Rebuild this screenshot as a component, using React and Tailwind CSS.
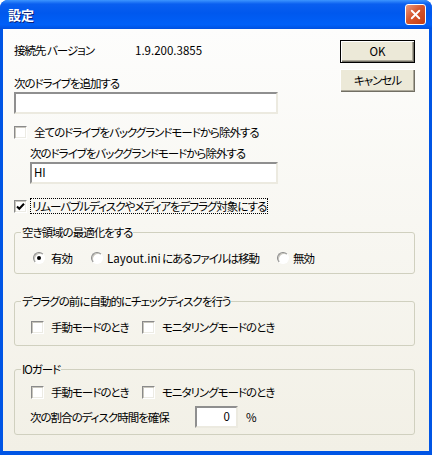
import { X } from 'lucide-react';

const font = "font-['Noto_Sans_CJK_JP',sans-serif] [font-feature-settings:'palt']";

function CheckBox({ checked }) {
  return (
    <span className="w-[13px] h-[13px] shrink-0 flex items-center justify-center bg-white border border-t-[#8a8a8a] border-l-[#8a8a8a] border-b-white border-r-white shadow-[inset_1px_1px_0_#c8c6bd,inset_-1px_-1px_0_#ecebe4]">
      {checked && (
        <svg width="9" height="9" viewBox="0 0 9 9">
          <path d="M1 4.5 L3.3 6.8 L8 1.8" fill="none" stroke="#000" strokeWidth="2" />
        </svg>
      )}
    </span>
  );
}

function Radio({ checked }) {
  return (
    <span className="w-[12px] h-[12px] shrink-0 rounded-full flex items-center justify-center bg-white border border-t-[#8a8a8a] border-l-[#8a8a8a] border-b-white border-r-white shadow-[inset_1px_1px_0_#c8c6bd]">
      {checked && <span className="w-[4px] h-[4px] rounded-full bg-black" />}
    </span>
  );
}

function Check({ label, checked }) {
  return (
    <label className="flex items-center h-[14px] leading-[14px]">
      <CheckBox checked={checked} />
      <span className="ml-[7px]">{label}</span>
    </label>
  );
}

function Field({ className, value = '', right }) {
  return (
    <div className={`h-[22px] bg-white border-2 border-t-[#8f8f8f] border-l-[#8f8f8f] border-b-[#eceae0] border-r-[#eceae0] flex items-center px-[2px] tracking-normal ${right ? 'justify-end' : ''} ${className}`}>
      {value}
    </div>
  );
}

function Group({ legend, children, className, inner }) {
  return (
    <fieldset className={`border border-[#d0d0bf] rounded-[3px] ${className}`}>
      <legend className="ml-[6px] px-[1px] leading-[14px]">{legend}</legend>
      <div className={inner}>{children}</div>
    </fieldset>
  );
}

function Button({ children, isDefault }) {
  return (
    <button className={`w-[75px] h-[23px] flex items-center justify-center bg-[#ece9d8] shadow-[inset_1px_1px_0_#fff,inset_-1px_-1px_0_#716f64,inset_-2px_-2px_0_#aca899] ${isDefault ? 'border border-black' : ''}`}>
      {children}
    </button>
  );
}

export default function App() {
  return (
    <div className={`w-[432px] h-[455px] flex flex-col bg-[#0055e5] rounded-t-[8px] text-[11.5px] tracking-[-1px] text-black ${font}`}>
      {/* title bar */}
      <div className="h-[29px] shrink-0 flex items-center justify-between pl-[8px] pr-[6px] rounded-t-[8px] bg-[linear-gradient(180deg,#3d95ff_0%,#0a5ff0_14%,#0058ee_45%,#0060f8_85%,#0050e0_100%)]">
        <span className="text-white font-bold text-[13px] tracking-normal leading-[14px] [text-shadow:1px_1px_0_#0a1e7a]">設定</span>
        <div className="w-[21px] h-[21px] rounded-[3px] border border-white flex items-center justify-center bg-[linear-gradient(135deg,#ea9b82_0%,#d6572f_45%,#c43c12_100%)]">
          <X size={15} strokeWidth={3} color="#fff" />
        </div>
      </div>

      {/* body */}
      <div className="flex-1 mx-[3px] mb-[4px] pl-[11px] pr-[14px] pb-[13px] bg-gradient-to-b from-[#fdfdfc] to-[#f2f0e6] flex flex-col">
        <div className="flex items-start justify-between">
          <div className="pt-[14px]">
            <div className="flex h-[14px] leading-[14px]">
              <span className="w-[121px]">接続先 バージョン</span>
              <span className="tracking-normal">1.9.200.3855</span>
            </div>
            <div className="mt-[19px] h-[14px] leading-[14px]">次のドライブを追加する</div>
            <Field className="mt-[2px] w-[264px]" />
            <div className="mt-[11px]">
              <Check label="全てのドライブをバックグランドモードから除外する" />
            </div>
            <div className="ml-[16px] mt-[7px] h-[14px] leading-[14px]">次のドライブをバックグランドモードから除外する</div>
            <Field className="ml-[16px] mt-[2px] w-[248px]" value="HI" />
            <label className="mt-[15px] flex items-center h-[14px]">
              <CheckBox checked />
              <span className="ml-[3px] px-[1px] h-[16px] leading-[14px] border border-dotted border-black">リムーバブルディスクやメディアをデフラグ対象にする</span>
            </label>
          </div>
          <div className="pt-[11px] flex flex-col items-end gap-[6px]">
            <Button isDefault><span className="tracking-normal">OK</span></Button>
            <Button>キャンセル</Button>
          </div>
        </div>

        <Group legend="空き領域の最適化をする" className="mt-[12px]" inner="pl-[18px] pt-[12px] pb-[8px]">
          <div className="flex items-center h-[14px] leading-[14px]">
            <Radio checked />
            <span className="ml-[6px] w-[40px]">有効</span>
            <Radio />
            <span className="ml-[4px] w-[170px]"><span className="tracking-normal">Layout.ini</span> にあるファイルは移動</span>
            <Radio />
            <span className="ml-[4px]">無効</span>
          </div>
        </Group>

        <Group legend="デフラグの前に自動的にチェックディスクを行う" className="mt-[20px]" inner="pl-[16px] pt-[12px] pb-[11px]">
          <div className="flex items-center">
            <div className="w-[111px]"><Check label="手動モードのとき" /></div>
            <Check label="モニタリングモードのとき" />
          </div>
        </Group>

        <Group legend="IOガード" className="mt-[16px]" inner="pl-[16px] pt-[9px] pb-[6px]">
          <div className="flex items-center">
            <div className="w-[111px]"><Check label="手動モードのとき" /></div>
            <Check label="モニタリングモードのとき" />
          </div>
          <div className="mt-[7px] flex items-center -ml-[1px]">
            <span className="w-[165px] leading-[14px]">次の割合のディスク時間を確保</span>
            <Field className="w-[43px] pr-[6px]" value="0" right />
            <span className="ml-[8px] leading-[14px] tracking-normal">%</span>
          </div>
        </Group>
      </div>
    </div>
  );
}
